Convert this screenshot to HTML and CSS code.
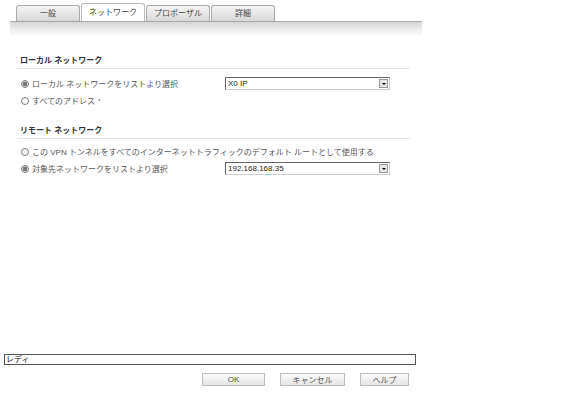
FILE: index.html
```html
<!DOCTYPE html>
<html lang="ja">
<head>
    <meta charset="UTF-8">
    <title>VPN ポリシー</title>
    <link rel="stylesheet" href="styles.css">
</head>
<body>
    <div class="dialog">
        <div class="tabs">
            <div class="tab">一般</div>
            <div class="tab active">ネットワーク</div>
            <div class="tab">プロポーザル</div>
            <div class="tab">詳細</div>
        </div>
        <div class="tab-bar"></div>

        <div class="panel">
            <div class="section local">
                <h3>ローカル ネットワーク</h3>
                <div class="row">
                    <label class="choice"><input type="radio" name="local" checked> ローカル ネットワークをリストより選択</label>
                    <div class="select"><span>X0 IP</span><i class="arrow"></i></div>
                </div>
                <div class="row">
                    <label class="choice"><input type="radio" name="local"> すべてのアドレス<sup>*</sup></label>
                </div>
            </div>

            <div class="section remote">
                <h3>リモート ネットワーク</h3>
                <div class="row">
                    <label class="choice"><input type="radio" name="remote"> この VPN トンネルをすべてのインターネットトラフィックのデフォルト ルートとして使用する</label>
                </div>
                <div class="row">
                    <label class="choice"><input type="radio" name="remote" checked> 対象先ネットワークをリストより選択</label>
                    <div class="select"><span>192.168.168.35</span><i class="arrow"></i></div>
                </div>
            </div>
        </div>

        <div class="status">レディ</div>
        <div class="buttons">
            <button class="btn ok">OK</button>
            <button class="btn cancel">キャンセル</button>
            <button class="btn help">ヘルプ</button>
        </div>
    </div>
</body>
</html>
```

FILE: styles.css
```css
body {
    margin: 0;
    background: #fff;
    font-family: "Liberation Sans", "Noto Sans CJK JP", sans-serif;
    font-size: 8px;
    color: #555;
}
.dialog {
    width: 576px;
    height: 409px;
    display: flex;
    flex-direction: column;
}
.tabs {
    display: flex;
    align-items: flex-end;
    gap: 1px;
    padding-left: 16px;
    height: 21px;
}
.tab {
    width: 62px;
    height: 15px;
    line-height: 15px;
    text-align: center;
    font-size: 8px;
    color: #444;
    border: 1px solid #aaa;
    border-bottom: none;
    border-radius: 3px 3px 0 0;
    background: linear-gradient(#f4f4f4, #d8d8d8);
}
.tab.active {
    height: 17px;
    line-height: 17px;
    background: #fff;
    border-color: #bbb;
}
.tab-bar {
    margin-left: 10px;
    width: 412px;
    height: 14px;
    border-top: 1px solid #a8a8a8;
    background: linear-gradient(#d6d6d6, #fff);
}
.panel {
    padding: 18px 0 0 17px;
    width: 393px;
    flex: 1;
}
.section h3 {
    margin: 0 0 6px;
    padding: 0 0 3px 3px;
    font-size: 8px;
    font-weight: bold;
    color: #333;
    border-bottom: 1px solid #dde3ea;
}
.local {
    margin-bottom: 15px;
}
.remote h3 {
    margin-bottom: 4px;
}
.row {
    display: flex;
    align-items: center;
    height: 17px;
}
.choice {
    display: flex;
    align-items: center;
    gap: 3px;
    width: 204px;
    padding-left: 4px;
    white-space: nowrap;
    color: #555;
}
.choice input {
    margin: 0;
    width: 8px;
    height: 8px;
    accent-color: #777;
}
.choice sup {
    font-size: 6px;
}
.select {
    display: flex;
    align-items: center;
    justify-content: space-between;
    width: 161px;
    height: 11px;
    border: 1px solid #666;
    border-right-color: #ccc;
    border-bottom-color: #ccc;
    background: #fff;
    color: #222;
    padding-left: 2px;
}
.arrow {
    width: 9px;
    height: 9px;
    margin-right: 1px;
    background: #e6e6e6;
    border: 1px solid #999;
    box-sizing: border-box;
    position: relative;
}
.arrow::after {
    content: "";
    position: absolute;
    left: 2px;
    top: 3px;
    border-left: 2px solid transparent;
    border-right: 2px solid transparent;
    border-top: 2px solid #000;
}
.status {
    margin: 0 0 8px 4px;
    width: 409px;
    height: 9px;
    line-height: 9px;
    border: 1px solid #555;
    padding-left: 1px;
    color: #222;
    font-size: 8px;
}
.buttons {
    display: flex;
    gap: 15px;
    padding-left: 202px;
    margin-bottom: 23px;
}
.btn {
    height: 13px;
    padding: 0;
    font-family: inherit;
    font-size: 8px;
    color: #555;
    border: 1px solid #bbb;
    border-radius: 0;
    background: linear-gradient(#fbfbfb, #e4e4e4);
}
.ok { width: 63px; }
.cancel { width: 65px; }
.help { width: 49px; }
```
